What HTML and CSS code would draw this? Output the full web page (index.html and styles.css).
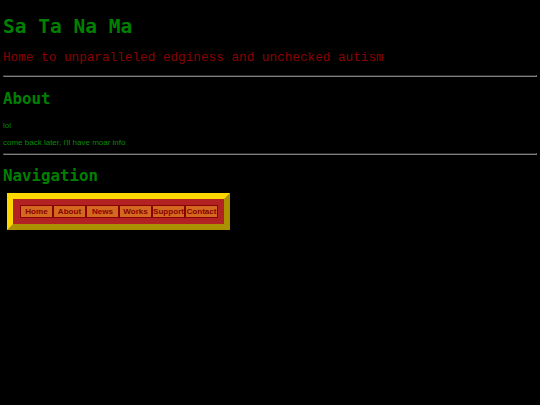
FILE: index.html
```html
<!DOCTYPE html>
<html>
<head>
<meta charset="utf-8">
<title>Sa Ta Na Ma</title>
<link rel="stylesheet" href="styles.css">
</head>
<body>
<h1 class="title">Sa Ta Na Ma</h1>
<p class="tagline">Home to unparalleled edginess and unchecked autism</p>
<hr class="rule rule-top">
<h2 class="heading heading-about">About</h2>
<p class="text text-first">lol</p>
<p class="text">come back later, i'll have moar info</p>
<hr class="rule rule-mid">
<h2 class="heading heading-nav">Navigation</h2>
<div class="navbox">
  <div class="navinner">
    <a class="navbtn" href="#">Home</a>
    <a class="navbtn" href="#">About</a>
    <a class="navbtn" href="#">News</a>
    <a class="navbtn" href="#">Works</a>
    <a class="navbtn" href="#">Support</a>
    <a class="navbtn" href="#">Contact</a>
  </div>
</div>
</body>
</html>
```
FILE: styles.css
```css
html, body {
  background: #000;
}
body {
  margin: 0 3px;
  padding-top: 15px;
  color: #008000;
}
.title {
  font-family: "DejaVu Sans Mono", monospace;
  font-weight: bold;
  font-size: 19.5px;
  color: #008000;
  margin: 0 0 12px 0;
}
.tagline {
  font-family: "Liberation Mono", monospace;
  font-size: 12.7px;
  color: #8b0000;
  margin: 0;
}
.rule {
  border: 1px inset #808080;
  color: gray;
  height: 0;
  margin: 0;
}
.rule-top {
  margin-top: 10px;
}
.rule-mid {
  margin-top: 6px;
}
.heading {
  font-family: "DejaVu Sans Mono", monospace;
  font-weight: bold;
  font-size: 15.8px;
  color: #008000;
  margin: 0;
}
.heading-about {
  margin-top: 12px;
}
.heading-nav {
  margin-top: 11px;
}
.text {
  font-family: "Liberation Sans", Arial, sans-serif;
  font-size: 8px;
  color: #0a8a0a;
  margin: 8px 0 0 0;
}
.text-first {
  margin-top: 13px;
}
.navbox {
  display: inline-block;
  margin: 8px 0 0 4px;
  border: 6px outset #ffd700;
  background: #b22222;
  padding: 6px 6px 6px 7px;
}
.navinner {
  display: flex;
}
.navbtn {
  box-sizing: border-box;
  width: 33px;
  height: 13px;
  border: 1px solid #8b0000;
  background: #d2691e;
  color: #8b0000;
  font-family: "Liberation Sans", Arial, sans-serif;
  font-weight: bold;
  font-size: 8.1px;
  line-height: 11px;
  display: flex;
  justify-content: center;
  text-decoration: none;
  white-space: nowrap;
}
```
